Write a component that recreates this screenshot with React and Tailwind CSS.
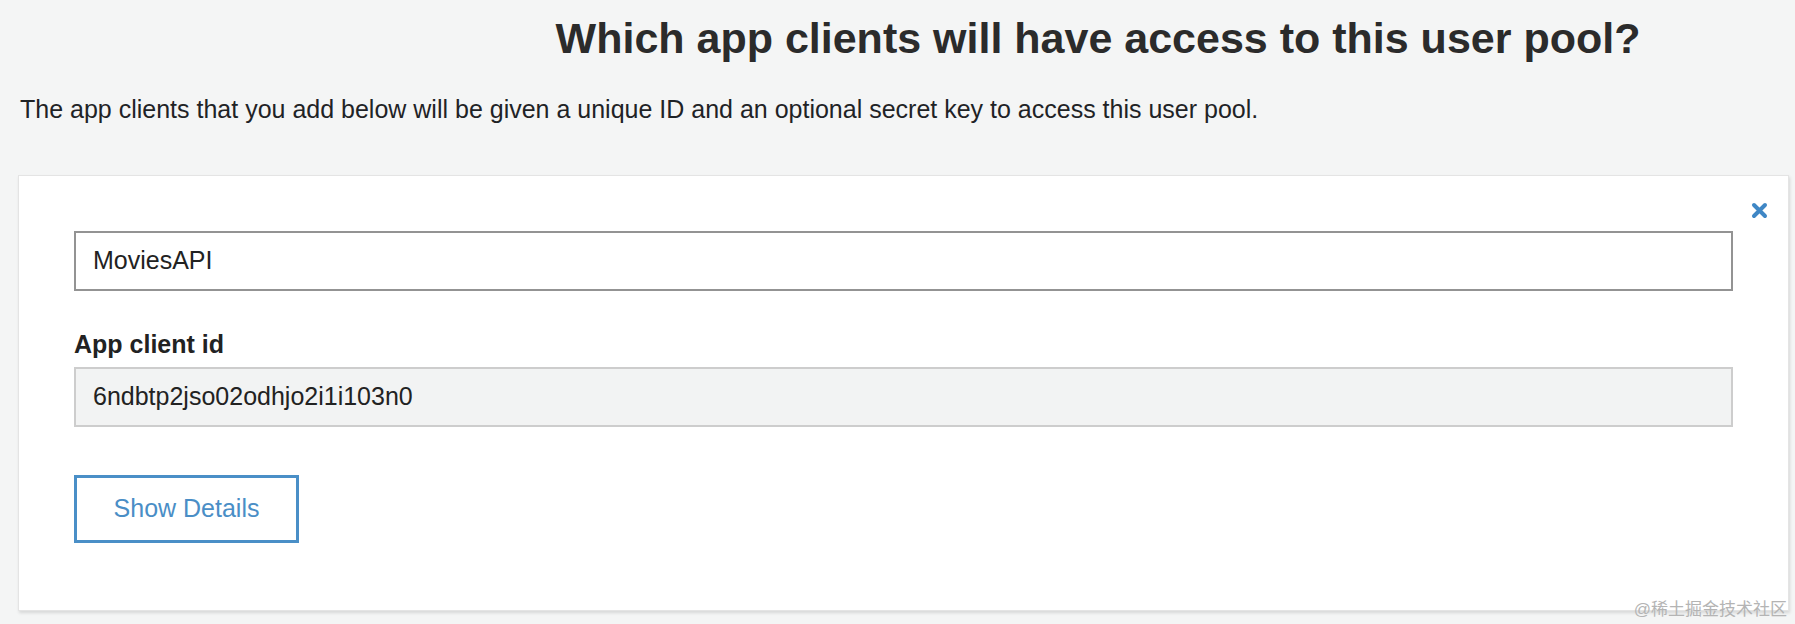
import React from 'react';

// app client panel, Cognito-style
function CloseIcon() {
    return (
        <svg width="17" height="17" viewBox="0 0 17 17" aria-hidden="true">
            <path d="M3 3 L14 14 M14 3 L3 14" stroke="#3f87c5" strokeWidth="4" strokeLinecap="round" />
        </svg>
    );
}

export default function App() {
    return (
        <div
            className="relative w-[1795px] h-[624px] overflow-hidden bg-[#f4f5f5] text-[#222]"
            style={{ fontFamily: '"Liberation Sans", Arial, "Noto Sans CJK SC", sans-serif' }}
        >
            <h1 className="pt-[17px] pl-[401px] text-center text-[43px] leading-none font-bold text-[#2b2b2b]">
                Which app clients will have access to this user pool?
            </h1>

            <p className="mt-[37px] pl-[20px] text-[25px] leading-none text-[#1f2326]">
                The app clients that you add below will be given a unique ID and an optional secret key to access this user pool.
            </p>

            <div className="relative mt-[53px] ml-[18px] w-[1771px] h-[436px] bg-white border border-[#e4e4e4] shadow-[1px_2px_3px_rgba(0,0,0,0.12)] px-[55px] pt-[55px]">
                <button className="absolute top-[26px] right-[20px] p-0 leading-none" title="Remove">
                    <CloseIcon />
                </button>

                <div className="h-[60px] w-full border-2 border-[#939393] flex items-center px-[17px] text-[25px] text-[#222]">
                    MoviesAPI
                </div>

                <div className="mt-[41px] text-[25px] leading-none font-bold text-[#222]">App client id</div>

                <div className="mt-[10px] h-[60px] w-full border-2 border-[#cdcdcd] bg-[#f2f3f3] flex items-center px-[17px] text-[25px] text-[#222]">
                    6ndbtp2jso02odhjo2i1i103n0
                </div>

                <button className="mt-[48px] w-[225px] h-[68px] border-[3px] border-[#4a8fc7] bg-white text-[25px] text-[#4a8ec6] flex items-center justify-center">
                    Show Details
                </button>
            </div>

            <div className="absolute right-[8px] bottom-[6px] text-[17px] leading-none text-[#b4b4b4]">
                @稀土掘金技术社区
            </div>
        </div>
    );
}
